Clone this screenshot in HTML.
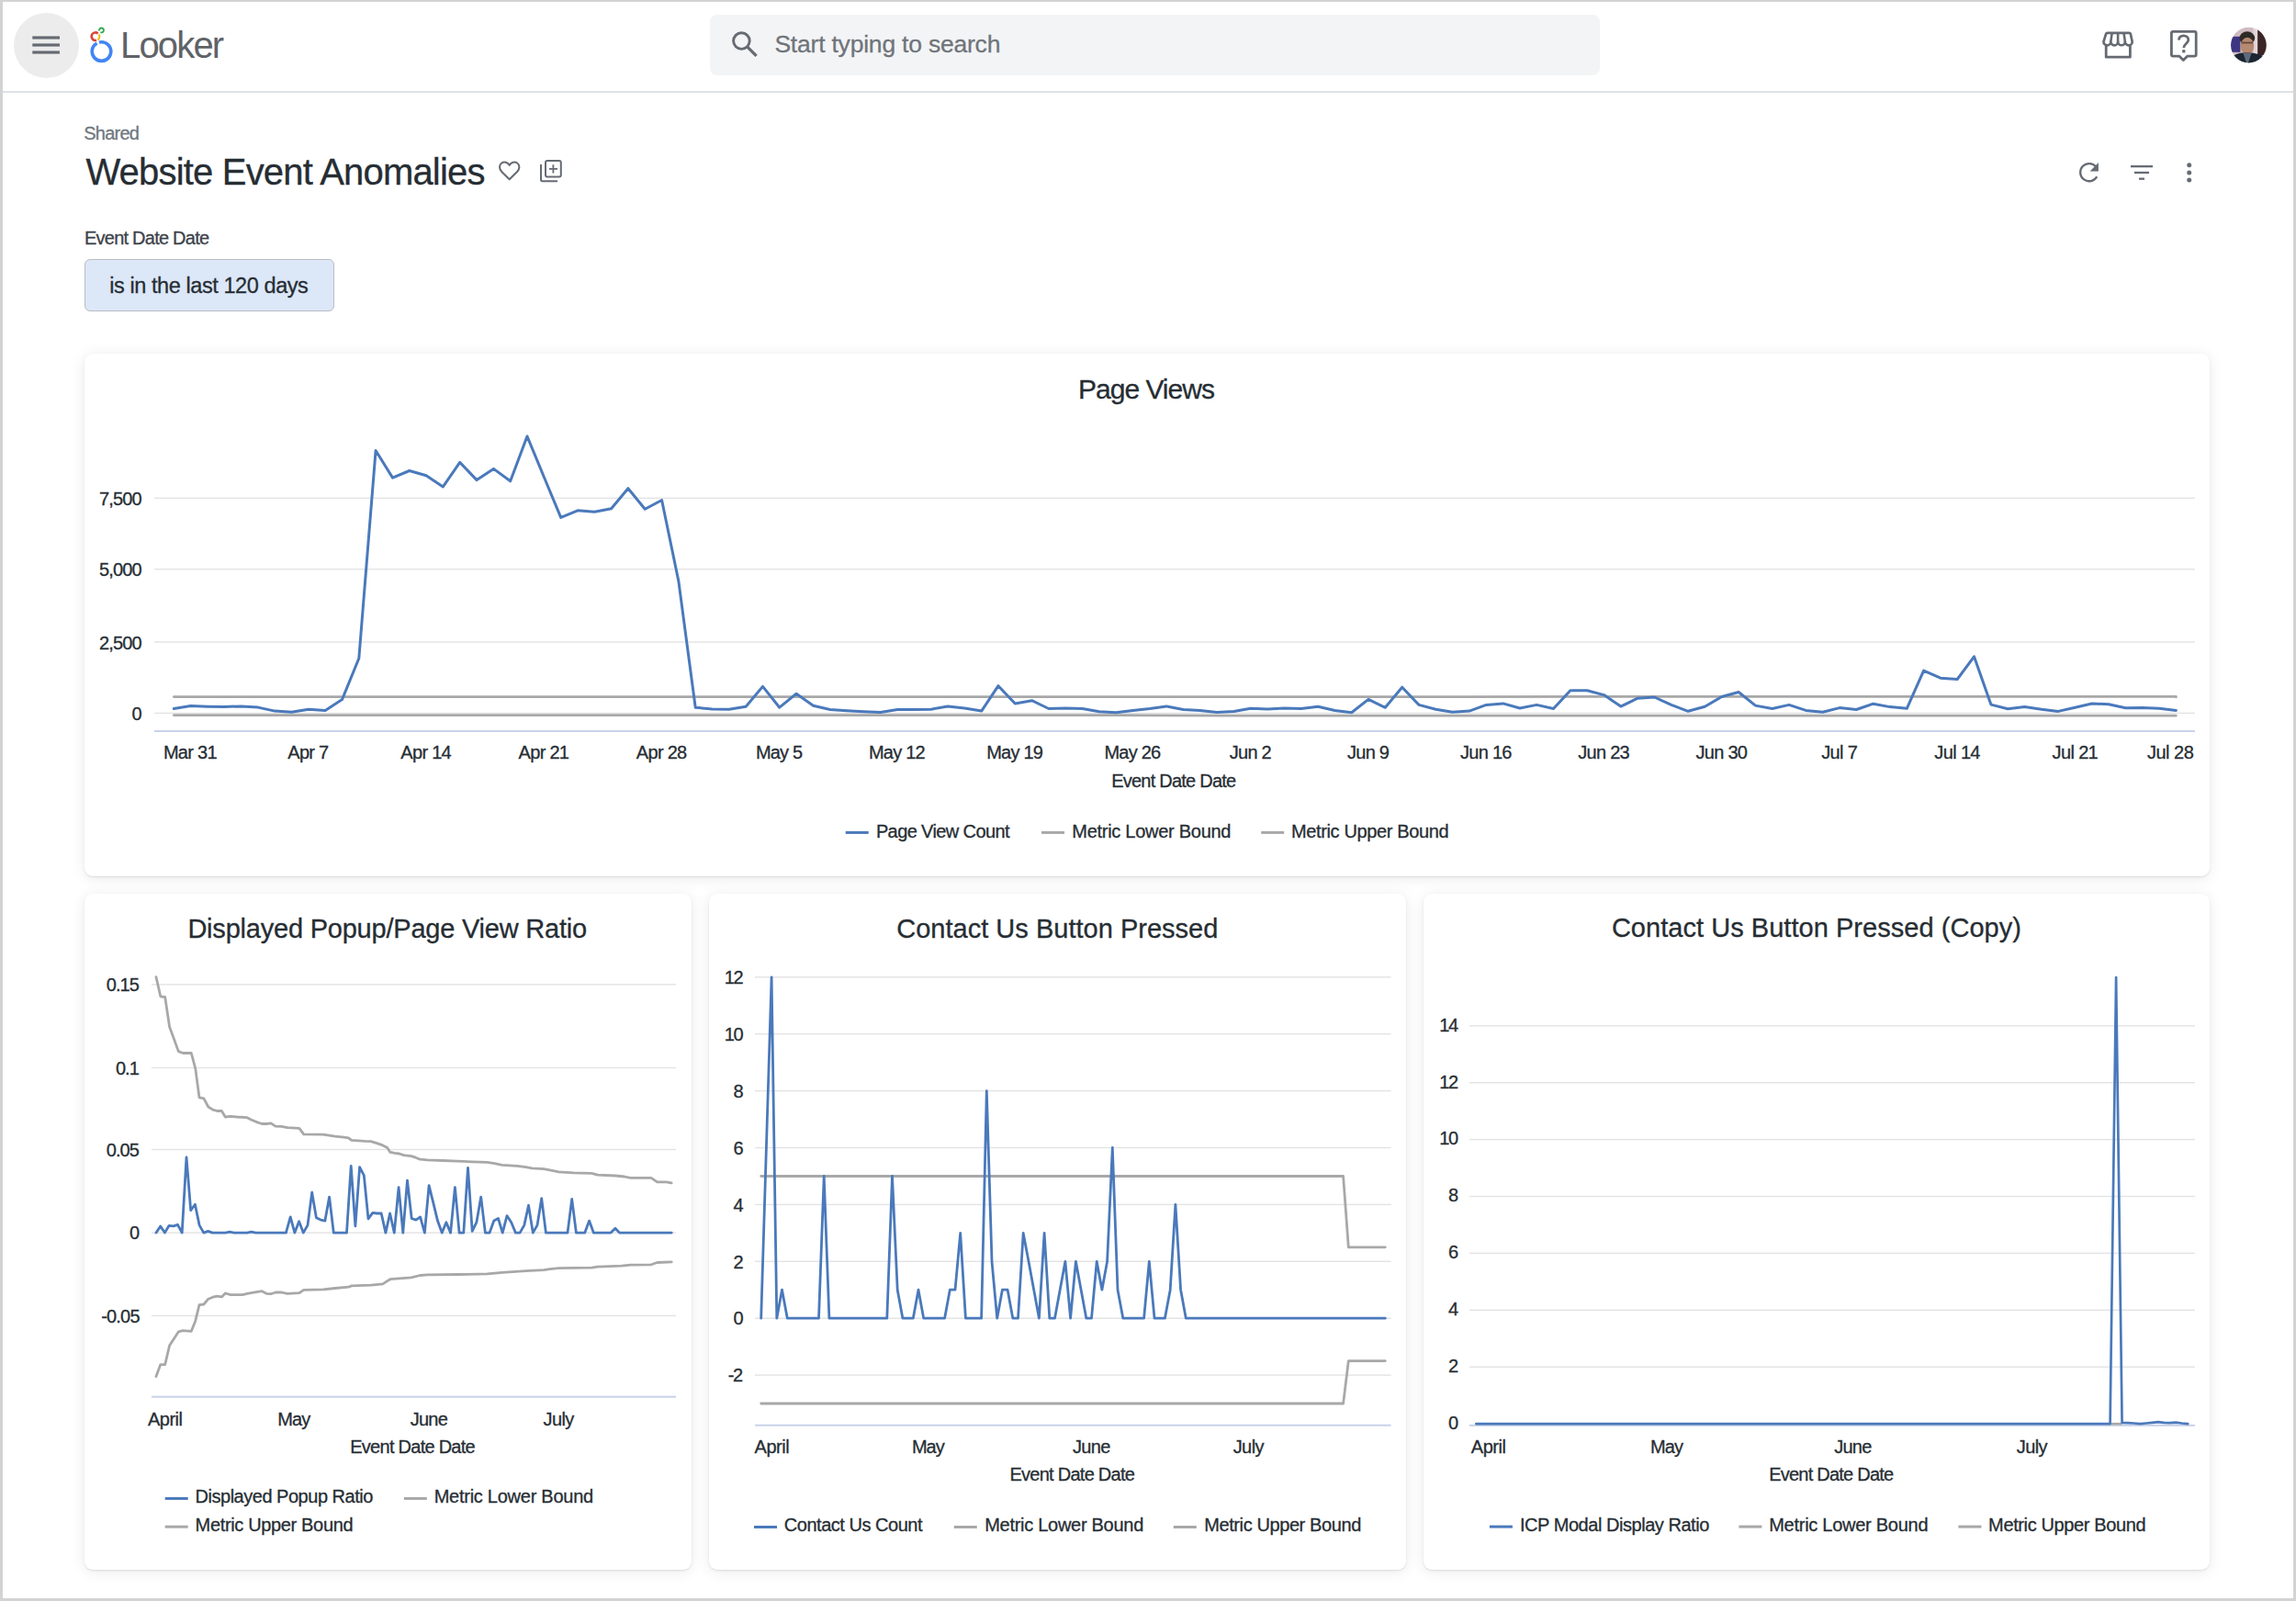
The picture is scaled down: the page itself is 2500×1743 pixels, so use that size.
<!DOCTYPE html><html><head><meta charset="utf-8"><style>
html,body{margin:0;padding:0;width:2500px;height:1743px;overflow:hidden;background:#fff;}
body{position:relative;font-family:"Liberation Sans",sans-serif;}
.t{position:absolute;white-space:nowrap;font-family:"Liberation Sans",sans-serif;-webkit-text-stroke:0.3px currentColor;}
.card{position:absolute;background:#fff;border-radius:9px;box-shadow:0 1px 2px rgba(0,0,0,0.10),0 2px 16px rgba(0,0,0,0.085);}
svg{position:absolute;left:0;top:0;overflow:visible;}
</style></head><body>
<div class="card" style="left:92px;top:385px;width:2314px;height:569px"></div><div class="card" style="left:92px;top:973px;width:661px;height:736px"></div><div class="card" style="left:772px;top:973px;width:759px;height:736px"></div><div class="card" style="left:1550px;top:973px;width:856px;height:736px"></div><div style="position:absolute;left:0;top:99px;width:2500px;height:2px;background:#dfe1e5"></div><div style="position:absolute;left:773px;top:16px;width:969px;height:65.5px;background:#f3f4f6;border-radius:8px"></div><div style="position:absolute;left:14.5px;top:13.5px;width:71px;height:71px;border-radius:50%;background:#ececec"></div><div style="position:absolute;left:92px;top:282px;width:272px;height:57px;box-sizing:border-box;background:#dce7f8;border:1.5px solid #b8bdc4;border-radius:6px"></div><svg width="2500" height="1743" viewBox="0 0 2500 1743"><rect x="35.3" y="39.4" width="29.7" height="3.2" fill="#666b73"/><rect x="35.3" y="47.4" width="29.7" height="3.2" fill="#666b73"/><rect x="35.3" y="55.4" width="29.7" height="3.2" fill="#666b73"/><circle cx="110.5" cy="56.1" r="10.3" fill="none" stroke="#4285f4" stroke-width="3.6" stroke-dasharray="62.2 2.5" stroke-dashoffset="19.1"/><path d="M106.66,36.41 A4.3,4.3 0 1 0 105.01,43.85" fill="none" stroke="#db4437" stroke-width="2.6"/><path d="M107.63,37.37 A4.4,4.4 0 0 1 106.36,43.35" fill="none" stroke="#f4b400" stroke-width="2.1"/><path d="M108.13,33.53 A2.45,2.45 0 1 1 109.46,35.12" fill="none" stroke="#34a853" stroke-width="1.9"/><circle cx="807.4" cy="44.6" r="8.8" fill="none" stroke="#666b73" stroke-width="2.9"/><line x1="813.6" y1="50.8" x2="823.6" y2="60.8" stroke="#666b73" stroke-width="3.2"/><path d="M2294.6,35.8 H2318.4 Q2319.6,35.8 2319.9,37 L2321.7,45.4 A3.9,3.9 0 0 1 2313.9,45.4 A3.9,3.9 0 0 1 2306.1,45.4 A3.9,3.9 0 0 1 2298.3,45.4 A3.9,3.9 0 0 1 2290.5,45.4 L2293.1,37 Q2293.4,35.8 2294.6,35.8 Z" fill="none" stroke="#666b73" stroke-width="2.7" stroke-linejoin="round"/><path d="M2298.3,45.4 L2299.6,36.5 M2306.1,45.4 V36.5 M2313.9,45.4 L2312.6,36.5" fill="none" stroke="#666b73" stroke-width="2.6"/><path d="M2293.2,49.2 V62.2 H2319.4 V49.2" fill="none" stroke="#666b73" stroke-width="2.8" stroke-linejoin="round"/><path d="M2366,34.4 H2389.6 A1.6,1.6 0 0 1 2391.2,36 V59.6 A1.6,1.6 0 0 1 2389.6,61.2 H2381.6 L2377.3,65.5 L2373,61.2 H2366 A1.6,1.6 0 0 1 2364.4,59.6 V36 A1.6,1.6 0 0 1 2366,34.4 Z" fill="none" stroke="#666b73" stroke-width="2.8" stroke-linejoin="round"/><path d="M2372.4,43.6 C2372.6,40.2 2375,38.8 2377.6,38.8 C2380.6,38.8 2382.8,40.8 2382.8,43.6 C2382.8,47.4 2377.8,47.8 2377.8,52" fill="none" stroke="#666b73" stroke-width="2.8"/><rect x="2376.2" y="54.2" width="3.2" height="3.2" fill="#666b73"/><defs><clipPath id="av"><circle cx="2448.4" cy="49.1" r="19.4"/></clipPath><filter id="avb" x="-10%" y="-10%" width="120%" height="120%"><feGaussianBlur stdDeviation="0.7"/></filter></defs><g clip-path="url(#av)"><g filter="url(#avb)"><rect x="2428" y="29" width="42" height="42" fill="#cfbcc2"/><rect x="2428" y="39.8" width="11.4" height="17" fill="#3d3682"/><rect x="2453.5" y="29" width="4.8" height="31" fill="#e3d6da"/><rect x="2458.2" y="29" width="12" height="31" fill="#3b2526"/><ellipse cx="2446.8" cy="41.5" rx="8.4" ry="7.2" fill="#2f2a28"/><ellipse cx="2447" cy="50.2" rx="7.2" ry="9.4" fill="#b6896f"/><rect x="2440.6" y="45.6" width="12.4" height="1.8" fill="#4a3328" opacity="0.75"/><path d="M2428,71 L2429,62.5 C2434,58.5 2440,56.8 2446,57.6 C2452,56.8 2460,58.2 2466,62 L2469,71 Z" fill="#1f2631"/><path d="M2442.5,58 L2447,71 L2451.5,58 Z" fill="#5e6c80"/></g></g><path d="M554.7,195.3 L546.3,187.1 C543.4,184.2 543.2,179.7 546.2,177.5 C549.1,175.4 552.8,176.6 554.7,179.8 C556.6,176.6 560.3,175.4 563.2,177.5 C566.2,179.7 566,184.2 563.1,187.1 Z" fill="none" stroke="#666b73" stroke-width="2.1" stroke-linejoin="round"/><rect x="594" y="175" width="16.8" height="17.4" rx="2" fill="none" stroke="#666b73" stroke-width="2"/><path d="M589,179 V195.6 A1.6,1.6 0 0 0 590.6,197.2 H607" fill="none" stroke="#666b73" stroke-width="2"/><path d="M598,183.9 H607 M602.4,179.3 V188.6" fill="none" stroke="#666b73" stroke-width="1.8"/><path d="M2282.2,181.6 A9.6,9.6 0 1 0 2283.2,192.2" fill="none" stroke="#666b73" stroke-width="2.3"/><path d="M2284.9,177 V186.6 H2275.6 Z" fill="#666b73"/><rect x="2320" y="180" width="24" height="2.3" fill="#666b73"/><rect x="2324" y="186.8" width="16" height="2.3" fill="#666b73"/><rect x="2329" y="193.5" width="6" height="2.3" fill="#666b73"/><circle cx="2383.7" cy="179.8" r="2.5" fill="#666b73"/><circle cx="2383.7" cy="187.9" r="2.5" fill="#666b73"/><circle cx="2383.7" cy="195.9" r="2.5" fill="#666b73"/><rect x="168" y="541.60" width="2222" height="1.4" fill="#e3e3e3"/><rect x="168" y="619.00" width="2222" height="1.4" fill="#e3e3e3"/><rect x="168" y="698.30" width="2222" height="1.4" fill="#e3e3e3"/><rect x="168" y="775.70" width="2222" height="1.4" fill="#e3e3e3"/><rect x="168" y="795" width="2222" height="2" fill="#c8d2e8"/><polyline points="189.3,758.6 317.5,758.6 445.8,758.6 574.0,758.6 702.3,758.6 830.5,758.6 958.7,758.6 1087.0,758.6 1215.2,758.6 1343.5,758.6 1471.7,758.6 1599.9,758.6 1728.2,758.3 1856.4,758.3 1984.7,758.3 2112.9,758.3 2241.1,758.3 2369.4,758.3 2369.4,759.0" fill="none" stroke="#a8a8a8" stroke-width="2.7" stroke-linejoin="round" stroke-linecap="round"/><polyline points="189.3,778.6 317.5,778.6 445.8,778.6 574.0,778.6 702.3,778.6 830.5,778.6 958.7,778.6 1087.0,778.6 1215.2,778.6 1343.5,779.2 1471.7,779.2 1599.9,779.2 1728.2,779.2 1856.4,779.2 1984.7,779.2 2112.9,779.2 2241.1,779.2 2369.4,779.2 2369.4,779.2" fill="none" stroke="#a8a8a8" stroke-width="2.7" stroke-linejoin="round" stroke-linecap="round"/><polyline points="189.3,771.6 207.6,768.6 225.9,769.2 244.3,769.5 262.6,768.9 280.9,770.1 299.2,774.1 317.5,775.3 335.9,772.3 354.2,773.5 372.5,761.6 390.8,716.8 409.1,490.5 427.5,520.1 445.8,512.5 464.1,517.7 482.4,529.9 500.7,503.4 519.1,522.6 537.4,510.4 555.7,523.8 574.0,475.0 592.3,519.2 610.7,563.4 629.0,555.8 647.3,557.3 665.6,553.7 683.9,531.7 702.3,554.3 720.6,544.5 738.9,632.9 757.2,770.2 775.5,771.9 793.9,772.2 812.2,769.2 830.5,747.4 848.8,770.2 867.1,755.2 885.5,768.3 903.8,772.5 922.1,773.8 940.4,774.8 958.7,775.4 977.1,772.5 995.4,772.5 1013.7,772.2 1032.0,768.9 1050.3,770.9 1068.7,774.1 1087.0,746.7 1105.3,766.0 1123.6,762.7 1141.9,771.5 1160.3,770.9 1178.6,771.5 1196.9,774.8 1215.2,775.8 1233.5,773.5 1251.9,771.5 1270.2,768.9 1288.5,772.5 1306.8,773.5 1325.1,775.4 1343.5,774.5 1361.8,771.2 1380.1,771.9 1398.4,770.9 1416.7,771.5 1435.1,769.2 1453.4,773.5 1471.7,775.8 1490.0,761.4 1508.3,770.3 1526.7,748.2 1545.0,767.4 1563.3,772.2 1581.6,775.3 1599.9,774.1 1618.3,767.4 1636.6,765.9 1654.9,771.0 1673.2,767.4 1691.5,771.5 1709.9,751.8 1728.2,751.8 1746.5,756.6 1764.8,769.1 1783.1,760.2 1801.5,759.0 1819.8,767.4 1838.1,774.3 1856.4,769.3 1874.7,758.5 1893.1,753.5 1911.4,768.1 1929.7,771.5 1948.0,767.4 1966.3,773.4 1984.7,775.2 2003.0,770.6 2021.3,772.5 2039.6,766.2 2057.9,769.6 2076.3,771.3 2094.6,730.1 2112.9,738.2 2131.2,739.5 2149.5,714.8 2167.9,767.1 2186.2,771.7 2204.5,769.6 2222.8,772.3 2241.1,774.4 2259.5,770.2 2277.8,766.0 2296.1,766.7 2314.4,770.8 2332.7,770.6 2351.1,771.3 2369.4,773.4" fill="none" stroke="#4a79bb" stroke-width="3" stroke-linejoin="round" stroke-linecap="round"/><rect x="920.7" y="904.9" width="25" height="3" fill="#4a79bb"/><rect x="1134" y="904.9" width="25" height="3" fill="#a8a8a8"/><rect x="1373.2" y="904.9" width="25" height="3" fill="#a8a8a8"/><rect x="165" y="1071.10" width="571" height="1.4" fill="#e3e3e3"/><rect x="165" y="1161.80" width="571" height="1.4" fill="#e3e3e3"/><rect x="165" y="1250.80" width="571" height="1.4" fill="#e3e3e3"/><rect x="165" y="1341.40" width="571" height="1.4" fill="#e3e3e3"/><rect x="165" y="1431.70" width="571" height="1.4" fill="#e3e3e3"/><rect x="165" y="1519.7" width="571" height="2" fill="#c8d2e8"/><polyline points="170.0,1063.7 174.8,1084.8 179.7,1085.5 184.6,1118.0 189.4,1130.9 194.3,1144.6 199.2,1146.5 208.3,1146.5 212.8,1163.4 217.0,1194.9 221.9,1195.9 226.8,1205.0 231.7,1208.2 236.5,1209.5 241.4,1209.5 245.3,1216.0 251.2,1215.4 257.6,1216.0 269.0,1216.7 273.9,1219.3 280.4,1221.9 285.3,1223.5 290.1,1223.5 295.0,1222.9 299.9,1226.1 306.4,1226.4 312.9,1227.7 325.9,1228.4 330.7,1234.9 351.8,1235.2 358.3,1236.2 364.8,1237.2 374.6,1238.1 379.4,1238.8 382.7,1241.4 397.3,1242.4 403.8,1242.7 410.3,1244.6 416.8,1246.9 421.7,1249.5 424.9,1254.4 429.8,1255.3 434.7,1256.0 439.5,1257.6 447.7,1258.6 452.5,1260.2 457.4,1262.2 465.5,1262.8 481.8,1263.5 498.0,1264.1 514.2,1264.8 530.5,1265.4 538.6,1266.7 546.7,1268.3 563.0,1269.3 572.7,1270.6 579.2,1271.9 592.2,1272.6 598.7,1273.9 608.4,1275.8 624.7,1276.8 644.2,1277.4 650.7,1279.1 670.1,1280.0 679.9,1281.0 686.4,1282.3 709.1,1282.3 715.6,1286.8 725.4,1286.8 731.2,1287.8" fill="none" stroke="#a8a8a8" stroke-width="2.8" stroke-linejoin="round" stroke-linecap="round"/><polyline points="170.0,1498.6 174.8,1485.6 179.7,1485.6 184.6,1464.8 189.4,1457.4 194.3,1449.9 199.2,1448.6 208.3,1449.3 212.8,1437.9 217.0,1420.7 221.9,1420.0 226.8,1414.2 231.7,1412.2 236.5,1411.2 241.4,1411.9 245.3,1408.0 251.2,1409.6 264.1,1409.6 269.0,1408.3 280.4,1406.4 285.3,1405.7 290.1,1408.3 295.0,1408.7 299.9,1407.0 306.4,1407.0 312.9,1408.3 325.9,1407.7 330.7,1404.4 351.8,1403.8 364.8,1402.5 379.4,1401.2 382.7,1399.9 403.8,1399.2 416.8,1397.9 421.7,1394.7 424.9,1392.7 434.7,1391.8 447.7,1390.8 457.4,1388.5 465.5,1387.9 498.0,1387.5 530.5,1386.9 546.7,1385.3 572.7,1383.6 592.2,1382.7 598.7,1381.7 608.4,1380.7 644.2,1380.1 650.7,1379.1 676.6,1378.1 686.4,1377.1 709.1,1376.8 715.6,1374.5 731.2,1373.9" fill="none" stroke="#a8a8a8" stroke-width="2.8" stroke-linejoin="round" stroke-linecap="round"/><polyline points="170.0,1342.1 174.7,1334.9 179.4,1342.1 184.1,1334.3 188.8,1334.9 193.5,1333.3 198.2,1342.1 203.0,1259.9 207.7,1317.7 212.4,1311.2 217.1,1333.9 221.8,1342.1 226.5,1340.4 231.3,1342.1 236.0,1342.1 240.7,1342.1 245.4,1342.1 250.1,1341.1 254.8,1342.1 259.6,1342.1 264.3,1342.1 269.0,1342.1 273.7,1341.1 278.4,1342.1 283.1,1342.1 287.9,1342.1 292.6,1342.1 297.3,1342.1 302.0,1342.1 306.7,1342.1 311.4,1342.1 316.2,1324.9 320.9,1342.1 325.6,1329.7 330.3,1342.1 335.0,1333.9 339.7,1298.2 344.4,1325.8 349.2,1328.1 353.9,1329.1 358.6,1303.1 363.3,1342.1 368.0,1342.1 372.7,1342.1 377.5,1342.1 382.2,1269.3 386.9,1334.9 391.6,1270.6 396.3,1279.7 401.0,1326.8 405.8,1320.3 410.5,1321.0 415.2,1321.0 419.9,1342.1 424.6,1321.0 429.3,1342.1 434.1,1292.7 438.8,1342.1 443.5,1285.2 448.2,1326.5 452.9,1328.1 457.6,1324.9 462.4,1342.1 467.1,1290.7 471.8,1309.6 476.5,1329.1 481.2,1342.1 485.9,1330.7 490.6,1342.1 495.4,1292.7 500.1,1342.1 504.8,1342.1 509.5,1271.3 514.2,1340.4 518.9,1330.7 523.7,1303.1 528.4,1342.1 533.1,1342.1 537.8,1329.1 542.5,1326.5 547.2,1342.1 552.0,1323.6 556.7,1330.7 561.4,1342.1 566.1,1342.1 570.8,1333.9 575.5,1312.2 580.3,1342.1 585.0,1333.9 589.7,1304.7 594.4,1342.1 599.1,1342.1 603.8,1342.1 608.6,1342.1 613.3,1342.1 618.0,1342.1 622.7,1305.4 627.4,1342.1 632.1,1342.1 636.8,1342.1 641.6,1329.1 646.3,1342.1 651.0,1342.1 655.7,1342.1 660.4,1342.1 665.1,1342.1 669.9,1337.2 674.6,1342.1 679.3,1342.1 684.0,1342.1 688.7,1342.1 693.4,1342.1 698.2,1342.1 702.9,1342.1 707.6,1342.1 712.3,1342.1 717.0,1342.1 721.7,1342.1 726.5,1342.1 731.2,1342.1" fill="none" stroke="#4a79bb" stroke-width="2.8" stroke-linejoin="round" stroke-linecap="round"/><rect x="179.7" y="1629.9" width="25" height="3" fill="#4a79bb"/><rect x="439.8" y="1629.9" width="25" height="3" fill="#a8a8a8"/><rect x="179.7" y="1660.7" width="25" height="3" fill="#a8a8a8"/><rect x="822" y="1063.10" width="692.6" height="1.4" fill="#e3e3e3"/><rect x="822" y="1125.00" width="692.6" height="1.4" fill="#e3e3e3"/><rect x="822" y="1186.90" width="692.6" height="1.4" fill="#e3e3e3"/><rect x="822" y="1248.80" width="692.6" height="1.4" fill="#e3e3e3"/><rect x="822" y="1310.70" width="692.6" height="1.4" fill="#e3e3e3"/><rect x="822" y="1372.60" width="692.6" height="1.4" fill="#e3e3e3"/><rect x="822" y="1434.50" width="692.6" height="1.4" fill="#e3e3e3"/><rect x="822" y="1496.40" width="692.6" height="1.4" fill="#e3e3e3"/><rect x="822" y="1550.7" width="692.6" height="2" fill="#c8d2e8"/><polyline points="828.7,1280.5 1462.6,1280.5 1468.3,1357.8 1508.3,1357.8" fill="none" stroke="#a8a8a8" stroke-width="2.8" stroke-linejoin="round" stroke-linecap="round"/><polyline points="828.7,1528.0 1462.6,1528.0 1468.3,1481.6 1508.3,1481.6" fill="none" stroke="#a8a8a8" stroke-width="2.8" stroke-linejoin="round" stroke-linecap="round"/><polyline points="828.7,1435.2 834.4,1249.5 840.1,1063.8 845.8,1435.2 851.5,1404.2 857.3,1435.2 863.0,1435.2 868.7,1435.2 874.4,1435.2 880.1,1435.2 885.8,1435.2 891.5,1435.2 897.2,1280.5 902.9,1435.2 908.7,1435.2 914.4,1435.2 920.1,1435.2 925.8,1435.2 931.5,1435.2 937.2,1435.2 942.9,1435.2 948.6,1435.2 954.3,1435.2 960.1,1435.2 965.8,1435.2 971.5,1280.5 977.2,1404.2 982.9,1435.2 988.6,1435.2 994.3,1435.2 1000.0,1404.2 1005.7,1435.2 1011.5,1435.2 1017.2,1435.2 1022.9,1435.2 1028.6,1435.2 1034.3,1404.2 1040.0,1404.2 1045.7,1342.4 1051.4,1435.2 1057.1,1435.2 1062.9,1435.2 1068.6,1435.2 1074.3,1187.6 1080.0,1373.3 1085.7,1435.2 1091.4,1404.2 1097.1,1404.2 1102.8,1435.2 1108.5,1435.2 1114.2,1342.4 1120.0,1373.3 1125.7,1404.2 1131.4,1435.2 1137.1,1342.4 1142.8,1435.2 1148.5,1435.2 1154.2,1404.2 1159.9,1373.3 1165.6,1435.2 1171.4,1373.3 1177.1,1404.2 1182.8,1435.2 1188.5,1435.2 1194.2,1373.3 1199.9,1404.2 1205.6,1373.3 1211.3,1249.5 1217.0,1404.2 1222.8,1435.2 1228.5,1435.2 1234.2,1435.2 1239.9,1435.2 1245.6,1435.2 1251.3,1373.3 1257.0,1435.2 1262.7,1435.2 1268.4,1435.2 1274.2,1404.2 1279.9,1311.4 1285.6,1404.2 1291.3,1435.2 1297.0,1435.2 1302.7,1435.2 1308.4,1435.2 1314.1,1435.2 1319.8,1435.2 1325.6,1435.2 1331.3,1435.2 1337.0,1435.2 1342.7,1435.2 1348.4,1435.2 1354.1,1435.2 1359.8,1435.2 1365.5,1435.2 1371.2,1435.2 1377.0,1435.2 1382.7,1435.2 1388.4,1435.2 1394.1,1435.2 1399.8,1435.2 1405.5,1435.2 1411.2,1435.2 1416.9,1435.2 1422.6,1435.2 1428.4,1435.2 1434.1,1435.2 1439.8,1435.2 1445.5,1435.2 1451.2,1435.2 1456.9,1435.2 1462.6,1435.2 1468.3,1435.2 1474.0,1435.2 1479.8,1435.2 1485.5,1435.2 1491.2,1435.2 1496.9,1435.2 1502.6,1435.2 1508.3,1435.2" fill="none" stroke="#4a79bb" stroke-width="2.8" stroke-linejoin="round" stroke-linecap="round"/><rect x="821" y="1661" width="25" height="3" fill="#4a79bb"/><rect x="1038.8" y="1661" width="25" height="3" fill="#a8a8a8"/><rect x="1277.8" y="1661" width="25" height="3" fill="#a8a8a8"/><rect x="1600" y="1116.10" width="790" height="1.4" fill="#e3e3e3"/><rect x="1600" y="1178.00" width="790" height="1.4" fill="#e3e3e3"/><rect x="1600" y="1239.90" width="790" height="1.4" fill="#e3e3e3"/><rect x="1600" y="1301.80" width="790" height="1.4" fill="#e3e3e3"/><rect x="1600" y="1363.70" width="790" height="1.4" fill="#e3e3e3"/><rect x="1600" y="1425.60" width="790" height="1.4" fill="#e3e3e3"/><rect x="1600" y="1487.50" width="790" height="1.4" fill="#e3e3e3"/><rect x="1600" y="1550.8" width="790" height="2" fill="#c8d2e8"/><line x1="2297.6" y1="1550.1" x2="2310.6" y2="1550.1" stroke="#a8a8a8" stroke-width="2.5"/><polyline points="1607.3,1550.1 1613.8,1550.1 1620.3,1550.1 1626.8,1550.1 1633.3,1550.1 1639.9,1550.1 1646.4,1550.1 1652.9,1550.1 1659.4,1550.1 1665.9,1550.1 1672.4,1550.1 1678.9,1550.1 1685.4,1550.1 1692.0,1550.1 1698.5,1550.1 1705.0,1550.1 1711.5,1550.1 1718.0,1550.1 1724.5,1550.1 1731.0,1550.1 1737.5,1550.1 1744.1,1550.1 1750.6,1550.1 1757.1,1550.1 1763.6,1550.1 1770.1,1550.1 1776.6,1550.1 1783.1,1550.1 1789.6,1550.1 1796.1,1550.1 1802.7,1550.1 1809.2,1550.1 1815.7,1550.1 1822.2,1550.1 1828.7,1550.1 1835.2,1550.1 1841.7,1550.1 1848.2,1550.1 1854.8,1550.1 1861.3,1550.1 1867.8,1550.1 1874.3,1550.1 1880.8,1550.1 1887.3,1550.1 1893.8,1550.1 1900.3,1550.1 1906.9,1550.1 1913.4,1550.1 1919.9,1550.1 1926.4,1550.1 1932.9,1550.1 1939.4,1550.1 1945.9,1550.1 1952.4,1550.1 1958.9,1550.1 1965.5,1550.1 1972.0,1550.1 1978.5,1550.1 1985.0,1550.1 1991.5,1550.1 1998.0,1550.1 2004.5,1550.1 2011.0,1550.1 2017.6,1550.1 2024.1,1550.1 2030.6,1550.1 2037.1,1550.1 2043.6,1550.1 2050.1,1550.1 2056.6,1550.1 2063.1,1550.1 2069.7,1550.1 2076.2,1550.1 2082.7,1550.1 2089.2,1550.1 2095.7,1550.1 2102.2,1550.1 2108.7,1550.1 2115.2,1550.1 2121.7,1550.1 2128.3,1550.1 2134.8,1550.1 2141.3,1550.1 2147.8,1550.1 2154.3,1550.1 2160.8,1550.1 2167.3,1550.1 2173.8,1550.1 2180.4,1550.1 2186.9,1550.1 2193.4,1550.1 2199.9,1550.1 2206.4,1550.1 2212.9,1550.1 2219.4,1550.1 2225.9,1550.1 2232.5,1550.1 2239.0,1550.1 2245.5,1550.1 2252.0,1550.1 2258.5,1550.1 2265.0,1550.1 2271.5,1550.1 2278.0,1550.1 2284.5,1550.1 2291.1,1550.1 2297.6,1550.1 2304.1,1064.2 2310.6,1548.9 2317.1,1549.2 2323.6,1549.5 2330.1,1550.1 2336.6,1549.5 2343.2,1548.9 2349.7,1548.2 2356.2,1548.9 2362.7,1549.2 2369.2,1548.6 2375.7,1549.5 2382.2,1550.1" fill="none" stroke="#4a79bb" stroke-width="2.7" stroke-linejoin="round" stroke-linecap="round"/><rect x="1621.9" y="1660.6" width="25" height="3" fill="#4a79bb"/><rect x="1893.4" y="1660.6" width="25" height="3" fill="#a8a8a8"/><rect x="2132.4" y="1660.6" width="25" height="3" fill="#a8a8a8"/></svg><div class="t" style="left:1174.00px;top:408.50px;font-size:30px;line-height:30px;color:#262d33;letter-spacing:-1.000px;">Page Views</div><div class="t" style="left:108.03px;top:532.90px;font-size:20px;line-height:20px;color:#262d33;letter-spacing:-0.857px;">7,500</div><div class="t" style="left:108.03px;top:610.30px;font-size:20px;line-height:20px;color:#262d33;letter-spacing:-0.857px;">5,000</div><div class="t" style="left:108.03px;top:689.60px;font-size:20px;line-height:20px;color:#262d33;letter-spacing:-0.857px;">2,500</div><div class="t" style="left:143.60px;top:767.00px;font-size:20px;line-height:20px;color:#262d33;letter-spacing:0.000px;">0</div><div class="t" style="left:177.95px;top:808.80px;font-size:20px;line-height:20px;color:#262d33;letter-spacing:-0.732px;">Mar 31</div><div class="t" style="left:313.30px;top:808.80px;font-size:20px;line-height:20px;color:#262d33;letter-spacing:-0.720px;">Apr 7</div><div class="t" style="left:436.37px;top:808.80px;font-size:20px;line-height:20px;color:#262d33;letter-spacing:-0.708px;">Apr 14</div><div class="t" style="left:564.61px;top:808.80px;font-size:20px;line-height:20px;color:#262d33;letter-spacing:-0.708px;">Apr 21</div><div class="t" style="left:692.85px;top:808.80px;font-size:20px;line-height:20px;color:#262d33;letter-spacing:-0.708px;">Apr 28</div><div class="t" style="left:822.91px;top:808.80px;font-size:20px;line-height:20px;color:#262d33;letter-spacing:-0.795px;">May 5</div><div class="t" style="left:945.98px;top:808.80px;font-size:20px;line-height:20px;color:#262d33;letter-spacing:-0.768px;">May 12</div><div class="t" style="left:1074.22px;top:808.80px;font-size:20px;line-height:20px;color:#262d33;letter-spacing:-0.768px;">May 19</div><div class="t" style="left:1202.46px;top:808.80px;font-size:20px;line-height:20px;color:#262d33;letter-spacing:-0.768px;">May 26</div><div class="t" style="left:1338.75px;top:808.80px;font-size:20px;line-height:20px;color:#262d33;letter-spacing:-0.735px;">Jun 2</div><div class="t" style="left:1466.99px;top:808.80px;font-size:20px;line-height:20px;color:#262d33;letter-spacing:-0.735px;">Jun 9</div><div class="t" style="left:1590.06px;top:808.80px;font-size:20px;line-height:20px;color:#262d33;letter-spacing:-0.720px;">Jun 16</div><div class="t" style="left:1718.30px;top:808.80px;font-size:20px;line-height:20px;color:#262d33;letter-spacing:-0.720px;">Jun 23</div><div class="t" style="left:1846.54px;top:808.80px;font-size:20px;line-height:20px;color:#262d33;letter-spacing:-0.720px;">Jun 30</div><div class="t" style="left:1983.24px;top:808.80px;font-size:20px;line-height:20px;color:#262d33;letter-spacing:-0.630px;">Jul 7</div><div class="t" style="left:2106.31px;top:808.80px;font-size:20px;line-height:20px;color:#262d33;letter-spacing:-0.636px;">Jul 14</div><div class="t" style="left:2234.55px;top:808.80px;font-size:20px;line-height:20px;color:#262d33;letter-spacing:-0.636px;">Jul 21</div><div class="t" style="left:2338.05px;top:808.80px;font-size:20px;line-height:20px;color:#262d33;letter-spacing:-0.530px;">Jul 28</div><div class="t" style="left:1210.15px;top:840.00px;font-size:20px;line-height:20px;color:#262d33;letter-spacing:-0.764px;">Event Date Date</div><div class="t" style="left:953.90px;top:895.20px;font-size:20px;line-height:20px;color:#262d33;letter-spacing:-0.614px;">Page View Count</div><div class="t" style="left:1167.30px;top:895.20px;font-size:20px;line-height:20px;color:#262d33;letter-spacing:-0.276px;">Metric Lower Bound</div><div class="t" style="left:1406.00px;top:895.20px;font-size:20px;line-height:20px;color:#262d33;letter-spacing:-0.365px;">Metric Upper Bound</div><div class="t" style="left:204.40px;top:996.85px;font-size:29px;line-height:29px;color:#262d33;letter-spacing:-0.213px;">Displayed Popup/Page View Ratio</div><div class="t" style="left:115.73px;top:1062.10px;font-size:20px;line-height:20px;color:#262d33;letter-spacing:-0.910px;">0.15</div><div class="t" style="left:125.96px;top:1152.80px;font-size:20px;line-height:20px;color:#262d33;letter-spacing:-0.980px;">0.1</div><div class="t" style="left:115.73px;top:1241.80px;font-size:20px;line-height:20px;color:#262d33;letter-spacing:-0.910px;">0.05</div><div class="t" style="left:141.00px;top:1332.40px;font-size:20px;line-height:20px;color:#262d33;letter-spacing:0.000px;">0</div><div class="t" style="left:110.15px;top:1422.70px;font-size:20px;line-height:20px;color:#262d33;letter-spacing:-0.787px;">-0.05</div><div class="t" style="left:160.91px;top:1534.80px;font-size:20px;line-height:20px;color:#262d33;letter-spacing:-0.488px;">April</div><div class="t" style="left:302.34px;top:1534.80px;font-size:20px;line-height:20px;color:#262d33;letter-spacing:-0.925px;">May</div><div class="t" style="left:446.68px;top:1534.80px;font-size:20px;line-height:20px;color:#262d33;letter-spacing:-0.717px;">June</div><div class="t" style="left:591.49px;top:1534.80px;font-size:20px;line-height:20px;color:#262d33;letter-spacing:-0.600px;">July</div><div class="t" style="left:381.25px;top:1564.70px;font-size:20px;line-height:20px;color:#262d33;letter-spacing:-0.736px;">Event Date Date</div><div class="t" style="left:212.60px;top:1619.30px;font-size:20px;line-height:20px;color:#262d33;letter-spacing:-0.485px;">Displayed Popup Ratio</div><div class="t" style="left:472.70px;top:1619.30px;font-size:20px;line-height:20px;color:#262d33;letter-spacing:-0.259px;">Metric Lower Bound</div><div class="t" style="left:212.60px;top:1650.00px;font-size:20px;line-height:20px;color:#262d33;letter-spacing:-0.347px;">Metric Upper Bound</div><div class="t" style="left:976.25px;top:996.75px;font-size:29px;line-height:29px;color:#262d33;letter-spacing:0.013px;">Contact Us Button Pressed</div><div class="t" style="left:788.87px;top:1054.00px;font-size:20px;line-height:20px;color:#262d33;letter-spacing:-1.470px;">12</div><div class="t" style="left:788.87px;top:1115.90px;font-size:20px;line-height:20px;color:#262d33;letter-spacing:-1.470px;">10</div><div class="t" style="left:798.40px;top:1177.80px;font-size:20px;line-height:20px;color:#262d33;letter-spacing:0.000px;">8</div><div class="t" style="left:798.40px;top:1239.70px;font-size:20px;line-height:20px;color:#262d33;letter-spacing:0.000px;">6</div><div class="t" style="left:798.40px;top:1301.60px;font-size:20px;line-height:20px;color:#262d33;letter-spacing:0.000px;">4</div><div class="t" style="left:798.40px;top:1363.50px;font-size:20px;line-height:20px;color:#262d33;letter-spacing:0.000px;">2</div><div class="t" style="left:798.40px;top:1425.40px;font-size:20px;line-height:20px;color:#262d33;letter-spacing:0.000px;">0</div><div class="t" style="left:792.66px;top:1487.30px;font-size:20px;line-height:20px;color:#262d33;letter-spacing:-1.260px;">-2</div><div class="t" style="left:821.60px;top:1565.40px;font-size:20px;line-height:20px;color:#262d33;letter-spacing:-0.488px;">April</div><div class="t" style="left:992.88px;top:1565.40px;font-size:20px;line-height:20px;color:#262d33;letter-spacing:-0.925px;">May</div><div class="t" style="left:1168.07px;top:1565.40px;font-size:20px;line-height:20px;color:#262d33;letter-spacing:-0.717px;">June</div><div class="t" style="left:1342.72px;top:1565.40px;font-size:20px;line-height:20px;color:#262d33;letter-spacing:-0.600px;">July</div><div class="t" style="left:1099.45px;top:1595.20px;font-size:20px;line-height:20px;color:#262d33;letter-spacing:-0.736px;">Event Date Date</div><div class="t" style="left:853.80px;top:1650.40px;font-size:20px;line-height:20px;color:#262d33;letter-spacing:-0.473px;">Contact Us Count</div><div class="t" style="left:1072.20px;top:1650.40px;font-size:20px;line-height:20px;color:#262d33;letter-spacing:-0.282px;">Metric Lower Bound</div><div class="t" style="left:1311.20px;top:1650.40px;font-size:20px;line-height:20px;color:#262d33;letter-spacing:-0.400px;">Metric Upper Bound</div><div class="t" style="left:1754.90px;top:996.35px;font-size:29px;line-height:29px;color:#262d33;letter-spacing:0.039px;">Contact Us Button Pressed (Copy)</div><div class="t" style="left:1567.37px;top:1105.60px;font-size:20px;line-height:20px;color:#262d33;letter-spacing:-1.470px;">14</div><div class="t" style="left:1567.37px;top:1167.50px;font-size:20px;line-height:20px;color:#262d33;letter-spacing:-1.470px;">12</div><div class="t" style="left:1567.37px;top:1229.40px;font-size:20px;line-height:20px;color:#262d33;letter-spacing:-1.470px;">10</div><div class="t" style="left:1576.90px;top:1291.30px;font-size:20px;line-height:20px;color:#262d33;letter-spacing:0.000px;">8</div><div class="t" style="left:1576.90px;top:1353.20px;font-size:20px;line-height:20px;color:#262d33;letter-spacing:0.000px;">6</div><div class="t" style="left:1576.90px;top:1415.10px;font-size:20px;line-height:20px;color:#262d33;letter-spacing:0.000px;">4</div><div class="t" style="left:1576.90px;top:1477.00px;font-size:20px;line-height:20px;color:#262d33;letter-spacing:0.000px;">2</div><div class="t" style="left:1576.90px;top:1538.90px;font-size:20px;line-height:20px;color:#262d33;letter-spacing:0.000px;">0</div><div class="t" style="left:1601.80px;top:1565.30px;font-size:20px;line-height:20px;color:#262d33;letter-spacing:-0.488px;">April</div><div class="t" style="left:1797.11px;top:1565.30px;font-size:20px;line-height:20px;color:#262d33;letter-spacing:-0.925px;">May</div><div class="t" style="left:1997.13px;top:1565.30px;font-size:20px;line-height:20px;color:#262d33;letter-spacing:-0.717px;">June</div><div class="t" style="left:2195.82px;top:1565.30px;font-size:20px;line-height:20px;color:#262d33;letter-spacing:-0.600px;">July</div><div class="t" style="left:1926.20px;top:1595.30px;font-size:20px;line-height:20px;color:#262d33;letter-spacing:-0.771px;">Event Date Date</div><div class="t" style="left:1655.00px;top:1650.30px;font-size:20px;line-height:20px;color:#262d33;letter-spacing:-0.459px;">ICP Modal Display Ratio</div><div class="t" style="left:1926.20px;top:1650.30px;font-size:20px;line-height:20px;color:#262d33;letter-spacing:-0.265px;">Metric Lower Bound</div><div class="t" style="left:2165.10px;top:1650.30px;font-size:20px;line-height:20px;color:#262d33;letter-spacing:-0.371px;">Metric Upper Bound</div><div class="t" style="left:131.00px;top:29.40px;font-size:40px;line-height:40px;color:#5f6368;letter-spacing:-1.840px;-webkit-text-stroke:0px;">Looker</div><div class="t" style="left:843.40px;top:35.38px;font-size:26.5px;line-height:26.5px;color:#6f747a;letter-spacing:-0.210px;">Start typing to search</div><div class="t" style="left:91.20px;top:135.40px;font-size:20px;line-height:20px;color:#6f7781;letter-spacing:-0.740px;">Shared</div><div class="t" style="left:93.40px;top:167.00px;font-size:40px;line-height:40px;color:#262d33;letter-spacing:-0.809px;">Website Event Anomalies</div><div class="t" style="left:92.00px;top:248.50px;font-size:20px;line-height:20px;color:#3c4249;letter-spacing:-0.764px;">Event Date Date</div><div class="t" style="left:119.20px;top:299.72px;font-size:23.5px;line-height:23.5px;color:#262d33;letter-spacing:-0.423px;">is in the last 120 days</div><div style="position:absolute;left:0;top:0;width:2500px;height:1743px;box-sizing:border-box;border-style:solid;border-color:#d3d3d3;border-width:2px 3px 3px 3px;pointer-events:none"></div></body></html>
